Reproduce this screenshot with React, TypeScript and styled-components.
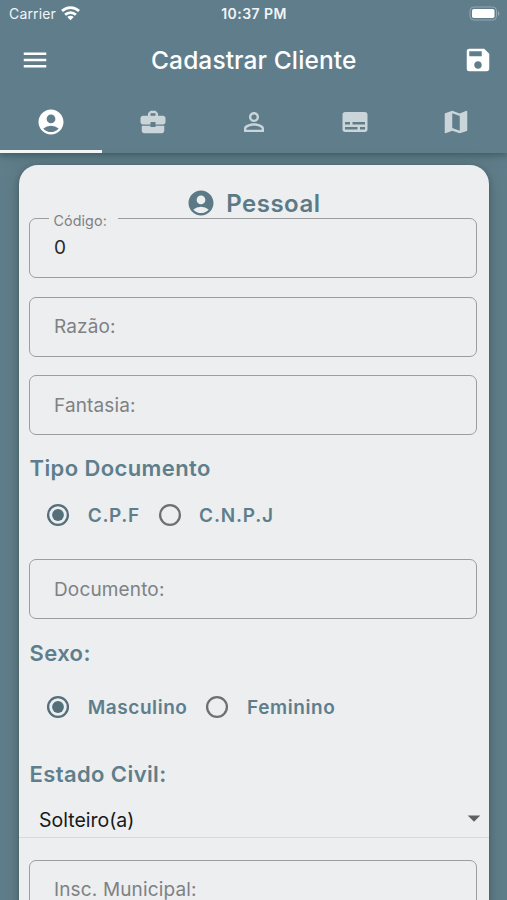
import React from 'react';
import styled, { createGlobalStyle } from 'styled-components';
import { MdAccountCircle, MdArrowDropDown, MdBusinessCenter, MdMap, MdMenu, MdPersonOutline, MdSave, MdSubtitles } from 'react-icons/md';

const slate = '#607d8b';

const GlobalStyle = createGlobalStyle`
  * { box-sizing: border-box; }
  body { margin: 0; background: ${slate}; font-family: Inter, "Liberation Sans", sans-serif; overflow: hidden; }
  svg { display: block; flex: none; }
`;

const Screen = styled.div`
  height: 900px;
  overflow: hidden;
  display: flex;
  flex-direction: column;
  background: ${slate};
`;

const Header = styled.header`
  flex: none;
  height: 153px;
  color: #fff;
  background: ${slate};
  box-shadow: 0 3px 5px rgba(40, 70, 75, 0.4), 0 2px 12px rgba(60, 90, 80, 0.3);
`;

const StatusBar = styled.div`
  height: 27px;
  padding: 0 7px 0 9px;
  display: grid;
  grid-template-columns: 1fr auto 1fr;
  align-items: center;
  font-size: 14px;
  line-height: 27px;
  color: #f0f5f7;
`;

const Carrier = styled.div`
  display: flex;
  align-items: center;
  gap: 5px;
  letter-spacing: 0.15px;
`;

const Clock = styled.div`
  margin-right: 1px;
  font-size: 14px;
  font-weight: 600;
  letter-spacing: 0.45px;
`;

const BatterySlot = styled.div`
  display: flex;
  justify-content: flex-end;
`;

const TitleBar = styled.div`
  height: 66px;
  padding: 0 14.5px 0 20px;
  display: flex;
  align-items: center;
  justify-content: space-between;
`;

const Title = styled.h1`
  margin: 0 5px 1px 0;
  font-size: 24.5px;
  line-height: 30px;
  font-weight: 500;
  letter-spacing: 0.1px;
  white-space: nowrap;
`;

const Tabs = styled.nav`
  height: 60px;
  display: grid;
  grid-template-columns: 102px repeat(4, 101px);
`;

const Tab = styled.div<{ $active?: boolean }>`
  display: flex;
  justify-content: center;
  padding-top: 14px;
  color: ${p => (p.$active ? '#fff' : '#cad5da')};
  border-bottom: 3px solid ${p => (p.$active ? '#f4f7f8' : 'transparent')};
`;

const Card = styled.main`
  flex: none;
  width: 469.5px;
  height: 800px;
  margin: 12px 0 0 19.3px;
  border-radius: 19px 19px 0 0;
  padding: 22px 12px 0 9.7px;
  background: #eceef0;
  box-shadow: 0 2px 5px rgba(35, 65, 75, 0.45), 0 3px 16px rgba(65, 90, 75, 0.5);
`;

const CardTitle = styled.h2`
  margin: 0;
  height: 31px;
  display: flex;
  align-items: center;
  justify-content: center;
  gap: 10px;
  padding: 1px 0 0 1px;
  color: #5b7a86;
  font-size: 24px;
  font-weight: 600;
  letter-spacing: 0.5px;
`;

const Outline = styled.fieldset<{ $top: number }>`
  position: relative;
  margin: ${p => p.$top}px 0 0;
  padding: 0 0 0 24px;
  width: 448px;
  height: 60px;
  display: flex;
  align-items: center;
  border: 1.5px solid #9b9d9f;
  border-radius: 7px;
  color: #7f8183;
  font-size: 19px;
  letter-spacing: 0.15px;
`;

const FloatingLabel = styled.span`
  position: absolute;
  left: 19px;
  top: -8px;
  width: 69px;
  padding-left: 4.5px;
  background: #eceef0;
  font-size: 14.3px;
  line-height: 20px;
  letter-spacing: 0.1px;
`;

const Value = styled.span`
  color: #27292b;
  font-size: 19px;
  line-height: 24px;
`;

const GroupTitle = styled.h3<{ $top: number }>`
  margin: ${p => p.$top}px 0 0 0.5px;
  color: #5f7e8b;
  font-size: 22px;
  font-weight: 600;
  line-height: 28px;
  letter-spacing: 0.4px;
`;

const RadioRow = styled.div<{ $top: number }>`
  margin: ${p => p.$top}px 0 0 14.3px;
  height: 30px;
  display: flex;
  align-items: center;
`;

const Option = styled.label<{ $width: number; $spacing: number }>`
  width: ${p => p.$width}px;
  display: flex;
  align-items: center;
  gap: 14.5px;
  color: #5f7e8b;
  font-size: 19px;
  font-weight: 600;
  letter-spacing: ${p => p.$spacing}px;
  white-space: nowrap;
`;

const Select = styled.div`
  margin: 11px -12px 0 -9.5px;
  height: 39px;
  padding: 0 0 0 19.5px;
  display: flex;
  align-items: center;
  justify-content: space-between;
  border-bottom: 1px solid #d7d9db;
  color: #18191a;
  font-size: 19.5px;
  line-height: 24px;
`;

const SelectValue = styled.span`
  padding-top: 4px;
  height: 28px;
  overflow: hidden;
`;

function Radio({ on }: { on?: boolean }) {
  const color = on ? '#546e7a' : '#6f6f70';
  return (
    <svg width="30" height="30" viewBox="0 0 30 30">
      <circle cx="15" cy="15" r="9.9" fill="none" stroke={color} strokeWidth="2.3" />
      {on && <circle cx="15" cy="15" r="5.9" fill={color} />}
    </svg>
  );
}

function Wifi() {
  return (
    <svg width="19" height="15" viewBox="0 0 19 15" fill="none" stroke="#fff" strokeWidth="2.8">
      <path d="M1 5.1C5.8.5 13.2.5 18 5.1M4.1 8.7c3.1-2.9 7.7-2.9 10.8 0" />
      <path d="M9.5 14.3 6.3 11c1.8-1.7 4.6-1.7 6.4 0z" fill="#fff" stroke="none" />
    </svg>
  );
}

function Battery() {
  return (
    <svg width="31" height="15" viewBox="0 0 31 15">
      <rect x="1" y="1" width="26.5" height="13" rx="3.8" fill="none" stroke="#94a9b2" />
      <rect x="3" y="3" width="22.5" height="9" rx="1.8" fill="#fff" />
      <path d="M29 5.2c1.8.7 1.8 3.9 0 4.6z" fill="#94a9b2" />
    </svg>
  );
}

export default function App() {
  return (
    <>
      <GlobalStyle />
      <Screen>
        <Header>
          <StatusBar>
            <Carrier>Carrier<Wifi /></Carrier>
            <Clock>10:37 PM</Clock>
            <BatterySlot><Battery /></BatterySlot>
          </StatusBar>
          <TitleBar>
            <MdMenu size={30} />
            <Title>Cadastrar Cliente</Title>
            <MdSave size={30} />
          </TitleBar>
          <Tabs>
            <Tab $active><MdAccountCircle size={30} /></Tab>
            <Tab><MdBusinessCenter size={30} /></Tab>
            <Tab><MdPersonOutline size={30} /></Tab>
            <Tab><MdSubtitles size={30} /></Tab>
            <Tab><MdMap size={30} /></Tab>
          </Tabs>
        </Header>
        <Card>
          <CardTitle><MdAccountCircle size={30} />Pessoal</CardTitle>
          <Outline $top={0}>
            <FloatingLabel>Código:</FloatingLabel>
            <Value>0</Value>
          </Outline>
          <Outline $top={18.5}>Razão:</Outline>
          <Outline $top={18.5}>Fantasia:</Outline>
          <GroupTitle $top={19}>Tipo Documento</GroupTitle>
          <RadioRow $top={18}>
            <Option $width={111.3} $spacing={0.6}><Radio on />C.P.F</Option>
            <Option $width={120} $spacing={0.8}><Radio />C.N.P.J</Option>
          </RadioRow>
          <Outline $top={29}>Documento:</Outline>
          <GroupTitle $top={20}>Sexo:</GroupTitle>
          <RadioRow $top={25}>
            <Option $width={159.2} $spacing={0.55}><Radio on />Masculino</Option>
            <Option $width={150} $spacing={0.6}><Radio />Feminino</Option>
          </RadioRow>
          <GroupTitle $top={38}>Estado Civil:</GroupTitle>
          <Select><SelectValue>Solteiro(a)</SelectValue><MdArrowDropDown size={30} color="#5d5f61" /></Select>
          <Outline $top={21.5}>Insc. Municipal:</Outline>
        </Card>
      </Screen>
    </>
  );
}
